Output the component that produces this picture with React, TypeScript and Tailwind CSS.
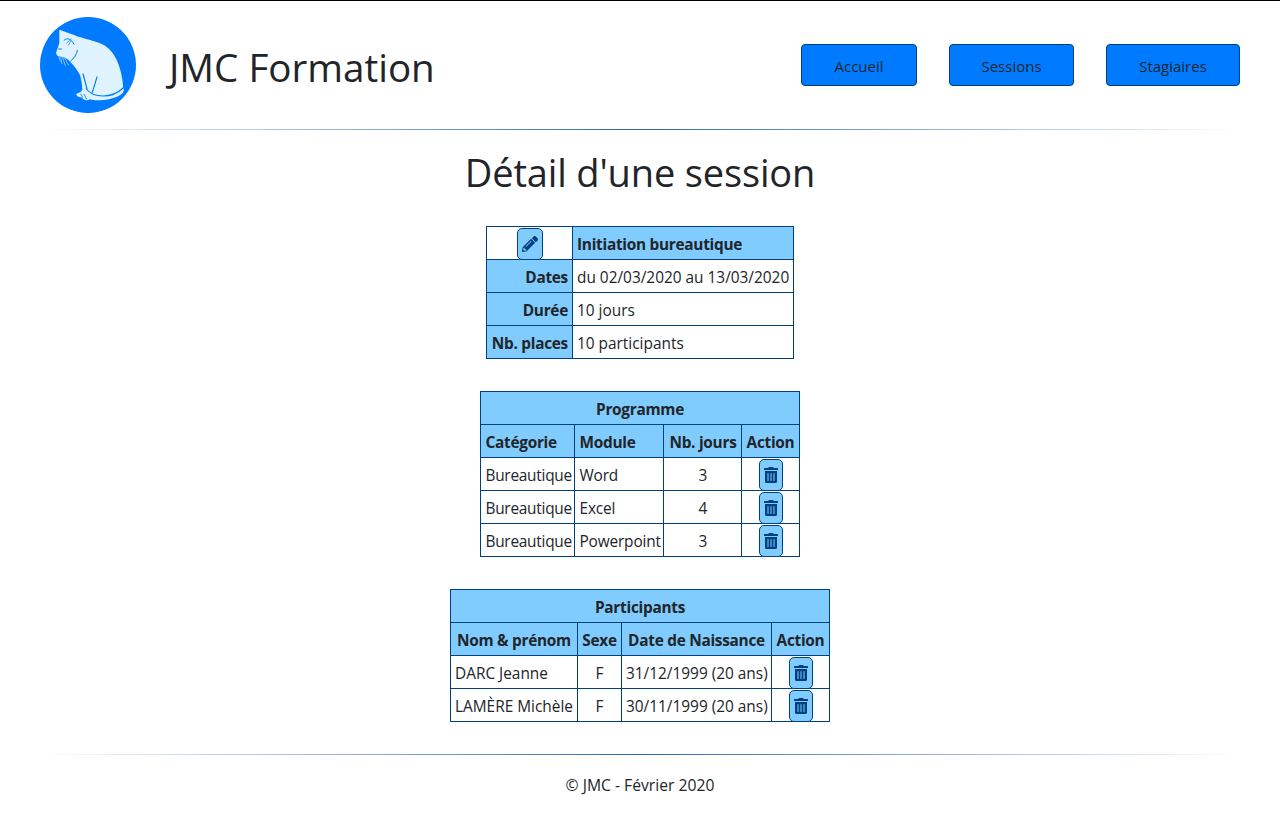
import { FaPencilAlt, FaTrashAlt } from "react-icons/fa";

const cellBorder = "border border-[#004080] h-[33px] px-1 whitespace-nowrap leading-none";
const th = `${cellBorder} pt-[4px] pb-0 bg-[#80ccff] font-bold tracking-[-0.28px]`;
const td = `${cellBorder} pt-[4px] pb-0 font-normal`;
const btnCell = `${cellBorder} py-0 text-center`;

function IconBtn({ w, children }: { w: string; children: React.ReactNode }) {
  return (
    <button className={`relative top-px inline-flex align-middle ${w} h-[32px] items-center justify-center rounded-[5px] border border-[#004080] bg-[#80ccff] text-[#004080]`}>
      {children}
    </button>
  );
}

const Trash = () => (
  <IconBtn w="w-[24px]">
    <FaTrashAlt size={16} />
  </IconBtn>
);

function Cols({ w }: { w: string[] }) {
  return (
    <colgroup>
      {w.map((c, i) => (
        <col key={i} className={c} />
      ))}
    </colgroup>
  );
}

function Rule() {
  return <div className="h-px mx-10 bg-gradient-to-r from-transparent via-[#2a6aa6] to-transparent" />;
}

function Cat() {
  return (
    <svg viewBox="120 50 288 288" className="w-24 h-24 shrink-0">
      <circle cx="264" cy="194" r="144" fill="#007bff" />
      <g fill="none" stroke="#bfe4ff" strokeWidth="2" strokeLinecap="round">
        <path d="M180 162 L186 190 M186 166 L196 196 M192 170 L206 194 M176 166 L180 182" />
      </g>
      <path
        fill="#dff3ff"
        d="M178 88 L222 104 C250 116 285 120 315 136 C345 155 360 195 366 232 C368 243 369 252 369 262 C373 266 372 274 366 280 C348 294 315 301 285 300 L268 297 C266 300 258 302 250 297 L244 291 C236 291 228 287 229 281 C232 277 242 278 247 268 C246 250 244 238 240 224 C232 210 222 196 212 186 C206 178 198 172 188 170 L172 166 L168 158 C172 146 176 136 178 128 Z"
      />
      <g fill="none" stroke="#007bff" strokeLinecap="round">
        <path strokeWidth="3" d="M192 120 C202 110 214 116 222 132" />
        <path strokeWidth="2" d="M200 128 L214 116 M206 134 L212 122" />
        <path strokeWidth="3.5" d="M176 146 L184 146" />
        <path strokeWidth="3" d="M232 150 C230 164 222 174 212 182" />
        <path strokeWidth="3.5" d="M249 221 C254 238 258 254 261 266" />
        <path strokeWidth="3.5" d="M291 230 C286 246 282 262 276 278" />
        <path strokeWidth="3.5" d="M259 266 C270 280 290 287 309 287 C330 287 352 280 369 263" />
        <path strokeWidth="2.5" d="M252 282 L260 296 M242 281 L248 291" />
      </g>
    </svg>
  );
}

function NavBtn({ w, label }: { w: string; label: string }) {
  return (
    <button className={`${w} h-[42px] rounded-[4px] border border-[#004080] bg-[#007bff] text-[#212529] text-[15px]`}>
      <span className="relative top-px">{label}</span>
    </button>
  );
}

export default function App() {
  return (
    <div
      className="min-h-[816px] bg-white text-[#212529] text-[15.4px] border-t border-black"
      style={{ fontFamily: '"Open Sans","Noto Sans",sans-serif' }}
    >
      <header className="flex items-center justify-between px-10 h-[128px]">
        <div className="flex items-center gap-[33px]">
          <Cat />
          <div className="text-[38.6px] leading-none pt-1">JMC Formation</div>
        </div>
        <nav className="flex gap-8">
          <NavBtn w="w-[116px]" label="Accueil" />
          <NavBtn w="w-[125px]" label="Sessions" />
          <NavBtn w="w-[134px]" label="Stagiaires" />
        </nav>
      </header>
      <Rule />
      <main className="flex flex-col items-center">
        <h1 className="text-[38px] leading-none tracking-[-0.15px] mt-[23px] mb-[35px] font-normal">Détail d'une session</h1>

        <table className="table-fixed border-collapse w-[307px] mb-[32px]">
          <Cols w={["w-[86px]", "w-[221px]"]} />
          <tbody>
            <tr>
              <td className={btnCell}>
                <IconBtn w="w-[26px]">
                  <FaPencilAlt size={16} />
                </IconBtn>
              </td>
              <th className={`${th} text-left`}>Initiation bureautique</th>
            </tr>
            <tr>
              <th className={`${th} text-right`}>Dates</th>
              <td className={td}>du 02/03/2020 au 13/03/2020</td>
            </tr>
            <tr>
              <th className={`${th} text-right`}>Durée</th>
              <td className={td}>10 jours</td>
            </tr>
            <tr>
              <th className={`${th} text-right`}>Nb. places</th>
              <td className={td}>10 participants</td>
            </tr>
          </tbody>
        </table>

        <table className="table-fixed border-collapse w-[318px] mb-[32px]">
          <Cols w={["w-[94px]", "w-[89px]", "w-[78px]", "w-[57px]"]} />
          <tbody>
            <tr>
              <th colSpan={4} className={`${th} text-center`}>Programme</th>
            </tr>
            <tr>
              <th className={`${th} text-left`}>Catégorie</th>
              <th className={`${th} text-left`}>Module</th>
              <th className={`${th} text-center`}>Nb. jours</th>
              <th className={`${th} text-center`}>Action</th>
            </tr>
            {[
              ["Word", "3"],
              ["Excel", "4"],
              ["Powerpoint", "3"],
            ].map(([m, j]) => (
              <tr key={m}>
                <td className={`${td} tracking-[-0.25px]`}>Bureautique</td>
                <td className={`${td} tracking-[-0.15px]`}>{m}</td>
                <td className={`${td} text-center`}>{j}</td>
                <td className={btnCell}>
                  <Trash />
                </td>
              </tr>
            ))}
          </tbody>
        </table>

        <table className="table-fixed border-collapse w-[379px] mb-[32px]">
          <Cols w={["w-[127px]", "w-[44px]", "w-[150px]", "w-[58px]"]} />
          <tbody>
            <tr>
              <th colSpan={4} className={`${th} text-center`}>Participants</th>
            </tr>
            <tr>
              <th className={`${th} text-center`}>Nom &amp; prénom</th>
              <th className={`${th} text-center`}>Sexe</th>
              <th className={`${th} text-center`}>Date de Naissance</th>
              <th className={`${th} text-center`}>Action</th>
            </tr>
            {[
              ["DARC Jeanne", "31/12/1999 (20 ans)"],
              ["LAMÈRE Michèle", "30/11/1999 (20 ans)"],
            ].map(([n, d]) => (
              <tr key={n}>
                <td className={td}>{n}</td>
                <td className={`${td} text-center`}>F</td>
                <td className={td}>{d}</td>
                <td className={btnCell}>
                  <Trash />
                </td>
              </tr>
            ))}
          </tbody>
        </table>
      </main>
      <Rule />
      <footer className="text-center pt-[19px] text-[15.7px]">© JMC - Février 2020</footer>
    </div>
  );
}
